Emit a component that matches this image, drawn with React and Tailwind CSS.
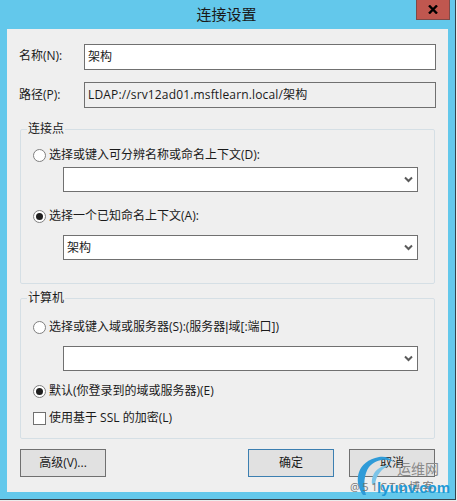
import React from 'react';

const fontStack = "font-['Open_Sans','Noto_Sans_CJK_SC',sans-serif]";

const Radio = ({ checked, children }) => (
    <div className="flex items-center h-4">
        <span className="w-[13px] h-[13px] rounded-full border border-[#7f7f7f] bg-white flex items-center justify-center shrink-0">
            {checked && <span className="w-[7px] h-[7px] rounded-full bg-[#1f1f1f]" />}
        </span>
        <span className="ml-[3px] whitespace-nowrap">{children}</span>
    </div>
);

const Combo = ({ value, className }) => (
    <div className={`ml-[30px] w-[355px] border border-[#707070] bg-white flex items-center justify-between pl-[3px] pr-[4px] ${className}`}>
        <span>{value}</span>
        <svg width="9" height="7" viewBox="0 0 9 7" className="shrink-0">
            <path d="M1 1.5 L4.5 5 L8 1.5" fill="none" stroke="#5a5a5a" strokeWidth="2" />
        </svg>
    </div>
);

const DialogButton = ({ label, active, className = '' }) => (
    <button className={`w-[86px] h-[28px] bg-[#e1e1e1] border ${active ? 'border-[#3c7fb1]' : 'border-[#707070]'} ${className}`}>
        {label}
    </button>
);

const Group = ({ title, className, children }) => (
    <fieldset className={`ml-[13px] w-[415px] border border-[#d5dfe5] rounded-[2px] pl-[12px] ${className}`}>
        <legend className="-ml-[6px] px-[1px] h-4 leading-4">{title}</legend>
        {children}
    </fieldset>
);

const App = () => {
    return (
        <div className={`w-[457px] h-[501px] bg-[#ececec] overflow-hidden text-[12px] leading-4 text-[#1a1a1a] relative ${fontStack}`}>
            <div className="w-[456px] h-[500px] bg-[#63c8eb] border-r border-b border-[#37414a]">
                {/* Title bar */}
                <div className="h-[29px] flex items-center justify-center text-[15px] relative">
                    <span className="-ml-[2px] -mt-[1px]">连接设置</span>
                    <div className="absolute left-[416px] top-0 w-[34px] h-[20px] bg-[#c0574f] border border-t-0 border-[#7d4a48] flex items-center justify-center">
                        <svg width="10" height="9" viewBox="0 0 10 9">
                            <path d="M1 0.5 L9 8.5 M9 0.5 L1 8.5" stroke="#000" strokeWidth="2.4" />
                        </svg>
                    </div>
                </div>

                {/* Client area */}
                <div className="ml-[7px] w-[441px] h-[463px] bg-[#efefef] pt-[15px]">
                    <div className="flex items-center pl-[12px]">
                        <span className="w-[65px] -mt-[2px]">名称(N):</span>
                        <div className="w-[352px] h-[26px] border border-[#707070] bg-white flex items-center pl-[3px]">架构</div>
                    </div>
                    <div className="flex items-center pl-[12px] mt-[12px]">
                        <span className="w-[65px]">路径(P):</span>
                        <div className="w-[352px] h-[26px] border border-[#707070] flex items-center pl-[3px] tracking-[0.15px]">
                            LDAP://srv12ad01.msftlearn.local/架构
                        </div>
                    </div>

                    <Group title="连接点" className="mt-[13px] h-[163px]">
                        <div className="pt-[10px]">
                            <Radio>选择或键入可分辨名称或命名上下文(D):</Radio>
                        </div>
                        <Combo value="" className="mt-[4px] h-[25px]" />
                        <div className="mt-[16px]">
                            <Radio checked>选择一个已知命名上下文(A):</Radio>
                        </div>
                        <Combo value="架构" className="mt-[11px] h-[25px]" />
                    </Group>

                    <Group title="计算机" className="mt-[6px] h-[149px]">
                        <div className="pt-[13px]">
                            <Radio>
                                选择或键入域或服务器(S):(服务器<span className="font-['Liberation_Sans']">|</span>域[:端口])
                            </Radio>
                        </div>
                        <Combo value="" className="mt-[11px] h-[25px]" />
                        <div className="mt-[12px]">
                            <Radio checked>默认(你登录到的域或服务器)(E)</Radio>
                        </div>
                        <div className="mt-[11px] flex items-center h-4">
                            <span className="w-[13px] h-[13px] border border-[#707070] bg-white shrink-0" />
                            <span className="ml-[3px]">使用基于 SSL 的加密(L)</span>
                        </div>
                    </Group>

                    <div className="flex mt-[10px] ml-[13px] w-[415px]">
                        <DialogButton label="高级(V)..." />
                        <DialogButton label="确定" active className="ml-auto" />
                        <DialogButton label="取消" className="ml-[15px]" />
                    </div>
                </div>
            </div>

            {/* Watermark */}
            <div className="absolute left-[352px] top-[454px] w-[100px] h-[44px] pointer-events-none">
                <svg width="46" height="46" viewBox="0 0 46 46" className="absolute left-0 top-0">
                    <path d="M11 41 C1 27 5 7 27 3 C33 2 38 4 42 8 C34 4 24 5 17 13 C12 20 11 32 14 41 Z" fill="#2f9bd8" />
                    <path d="M20 30 C19 20 26 11 38 11 C30 14 24 21 23 31 Z" fill="#7cc4e8" />
                </svg>
                <span className="absolute left-[45px] top-[7px] text-[14px] leading-4 text-[#8a8a8a] whitespace-nowrap">运维网</span>
                <span className="absolute left-[-2px] top-[25px] text-[11px] leading-4 text-[#777777] whitespace-nowrap tracking-[2.5px]">@51CTO博客</span>
                <span className="absolute left-[25px] top-[24px] text-[15px] leading-5 font-bold font-['Liberation_Sans'] text-[#1e9ad6] whitespace-nowrap">lyunv.com</span>
            </div>
        </div>
    );
};

export default App;
